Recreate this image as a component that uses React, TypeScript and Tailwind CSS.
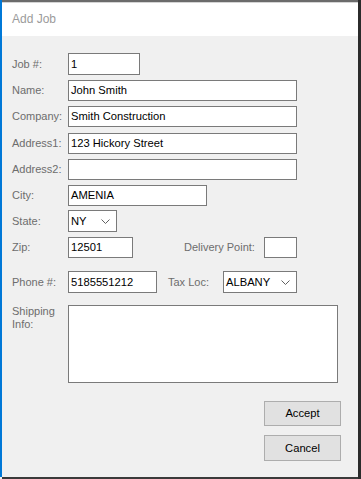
import React from 'react';

const labelFont = { fontFamily: '"Liberation Sans", Arial, sans-serif' };

function Label({ children, className = '' }: { children: React.ReactNode; className?: string }) {
  return (
    <span className={`text-[11px] leading-[13px] text-[#6d6d6d] ${className}`} style={labelFont}>
      {children}
    </span>
  );
}

function TextBox({ value = '', className = '' }: { value?: string; className?: string }) {
  return (
    <div
      className={`h-[21px] bg-white border border-[#7a7a7a] flex items-center pl-[2px] text-[11.2px] text-black ${className}`}
      style={labelFont}
    >
      {value}
    </div>
  );
}

function Combo({ value, className = '' }: { value: string; className?: string }) {
  return (
    <div
      className={`h-[22px] bg-white border border-[#7a7a7a] flex items-center justify-between pl-[2px] pr-[6px] text-[11.2px] text-black ${className}`}
      style={labelFont}
    >
      <span>{value}</span>
      <svg width="9" height="5" viewBox="0 0 9 5" fill="none">
        <path d="M0.5 0.5 L4.5 4.5 L8.5 0.5" stroke="#606060" strokeWidth="1" />
      </svg>
    </div>
  );
}

function Row({ label, children, className = '' }: { label: string; children: React.ReactNode; className?: string }) {
  return (
    <div className={`flex items-center ${className}`}>
      <Label className="w-[56px] shrink-0">{label}</Label>
      {children}
    </div>
  );
}

export default function App() {
  return (
    <div className="w-[361px] h-[479px] flex bg-[#f0f0f0] overflow-hidden">
      <div className="w-[2px] h-[477px] bg-[#0078d7] shrink-0" />
      <div className="flex-1 flex flex-col">
        <div className="h-[2px] bg-[#6b6b6b]" />
        <div className="h-[1px] bg-[#d4d4d4]" />
        <div className="h-[33px] bg-white flex items-center pl-[10px]">
          <span className="text-[12px] text-[#9b9b9b] -mt-[2px]" style={labelFont}>Add Job</span>
        </div>

        <div className="flex-1 flex flex-col pl-[10px] pt-[17px]">
          <Row label="Job #:">
            <TextBox value="1" className="w-[72px] h-[22px]" />
          </Row>
          <Row label="Name:" className="mt-[5px]">
            <TextBox value="John Smith" className="w-[229px]" />
          </Row>
          <Row label="Company:" className="mt-[5px]">
            <TextBox value="Smith Construction" className="w-[229px]" />
          </Row>
          <Row label="Address1:" className="mt-[6px]">
            <TextBox value="123 Hickory Street" className="w-[229px]" />
          </Row>
          <Row label="Address2:" className="mt-[5px]">
            <TextBox className="w-[229px]" />
          </Row>
          <Row label="City:" className="mt-[5px]">
            <TextBox value="AMENIA" className="w-[139px]" />
          </Row>
          <Row label="State:" className="mt-[4px]">
            <Combo value="NY" className="w-[49px]" />
          </Row>
          <Row label="Zip:" className="mt-[5px]">
            <TextBox value="12501" className="w-[65px]" />
            <Label className="ml-[51px] w-[80px]">Delivery Point:</Label>
            <TextBox className="w-[33px]" />
          </Row>
          <Row label="Phone #:" className="mt-[13px]">
            <TextBox value="5185551212" className="w-[89px] h-[22px]" />
            <Label className="ml-[11px] w-[55px]">Tax Loc:</Label>
            <Combo value="ALBANY" className="w-[74px]" />
          </Row>
          <div className="flex items-start mt-[12px]">
            <Label className="w-[56px] shrink-0">
              Shipping
              <br />
              Info:
            </Label>
            <div className="w-[270px] h-[78px] bg-white border border-[#7a7a7a]" />
          </div>

          <div className="flex flex-col items-end pr-[17px] mt-[18px] gap-[9px]">
            <button
              className="w-[77px] h-[25px] bg-[#e1e1e1] border border-[#adadad] text-[11.2px] text-black"
              style={labelFont}
            >
              Accept
            </button>
            <button
              className="w-[77px] h-[26px] bg-[#e1e1e1] border border-[#adadad] text-[11.2px] text-black"
              style={labelFont}
            >
              Cancel
            </button>
          </div>
        </div>
        <div className="h-[2px] bg-[#3a3a3a]" />
      </div>
      <div className="w-[3px] bg-[#2b2b2b] shrink-0" />
    </div>
  );
}
